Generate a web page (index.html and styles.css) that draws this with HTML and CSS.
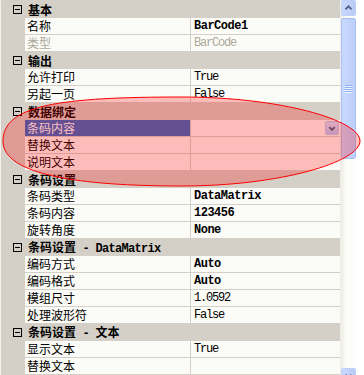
FILE: index.html
```html
<!DOCTYPE html>
<html>
<head>
<meta charset="utf-8">
<link rel="stylesheet" href="styles.css">
</head>
<body>
<div class="pg">
  <div class="grid">
    <div class="row hdr"><span class="mg"><svg class="box" width="9" height="9" viewBox="0 0 9 9"><rect x="0.5" y="0.5" width="8" height="8" fill="none" stroke="#000"/><path d="M2 4.5H7" stroke="#000"/></svg></span><span class="ht">基本</span></div>
    <div class="row"><span class="mg"></span><span class="nm">名称</span><span class="val b">BarCode1</span></div>
    <div class="row"><span class="mg"></span><span class="nm dis">类型</span><span class="val dis">BarCode</span></div>
    <div class="row hdr"><span class="mg"><svg class="box" width="9" height="9" viewBox="0 0 9 9"><rect x="0.5" y="0.5" width="8" height="8" fill="none" stroke="#000"/><path d="M2 4.5H7" stroke="#000"/></svg></span><span class="ht">输出</span></div>
    <div class="row"><span class="mg"></span><span class="nm">允许打印</span><span class="val">True</span></div>
    <div class="row"><span class="mg"></span><span class="nm">另起一页</span><span class="val">False</span></div>
    <div class="row hdr"><span class="mg"><svg class="box" width="9" height="9" viewBox="0 0 9 9"><rect x="0.5" y="0.5" width="8" height="8" fill="none" stroke="#000"/><path d="M2 4.5H7" stroke="#000"/></svg></span><span class="ht">数据绑定</span></div>
    <div class="row"><span class="mg"></span><span class="nm sel">条码内容</span><span class="val"><span class="dd"><svg width="13" height="13" viewBox="0 0 13 13"><path d="M3.5 5L6.5 8L9.5 5" fill="none" stroke="#4d6185" stroke-width="2"/></svg></span></span></div>
    <div class="row"><span class="mg"></span><span class="nm">替换文本</span><span class="val"></span></div>
    <div class="row"><span class="mg"></span><span class="nm">说明文本</span><span class="val"></span></div>
    <div class="row hdr"><span class="mg"><svg class="box" width="9" height="9" viewBox="0 0 9 9"><rect x="0.5" y="0.5" width="8" height="8" fill="none" stroke="#000"/><path d="M2 4.5H7" stroke="#000"/></svg></span><span class="ht">条码设置</span></div>
    <div class="row"><span class="mg"></span><span class="nm">条码类型</span><span class="val b">DataMatrix</span></div>
    <div class="row"><span class="mg"></span><span class="nm">条码内容</span><span class="val b">123456</span></div>
    <div class="row"><span class="mg"></span><span class="nm">旋转角度</span><span class="val b">None</span></div>
    <div class="row hdr"><span class="mg"><svg class="box" width="9" height="9" viewBox="0 0 9 9"><rect x="0.5" y="0.5" width="8" height="8" fill="none" stroke="#000"/><path d="M2 4.5H7" stroke="#000"/></svg></span><span class="ht">条码设置<span class="lat"> - DataMatrix</span></span></div>
    <div class="row"><span class="mg"></span><span class="nm">编码方式</span><span class="val b">Auto</span></div>
    <div class="row"><span class="mg"></span><span class="nm">编码格式</span><span class="val b">Auto</span></div>
    <div class="row"><span class="mg"></span><span class="nm">模组尺寸</span><span class="val">1.0592</span></div>
    <div class="row"><span class="mg"></span><span class="nm">处理波形符</span><span class="val">False</span></div>
    <div class="row hdr"><span class="mg"><svg class="box" width="9" height="9" viewBox="0 0 9 9"><rect x="0.5" y="0.5" width="8" height="8" fill="none" stroke="#000"/><path d="M2 4.5H7" stroke="#000"/></svg></span><span class="ht">条码设置<span class="lat"> - </span>文本</span></div>
    <div class="row"><span class="mg"></span><span class="nm">显示文本</span><span class="val">True</span></div>
    <div class="row"><span class="mg"></span><span class="nm">替换文本</span><span class="val"></span></div>
  </div>
  <div class="sb">
    <div class="sbtn"><svg width="15" height="16" viewBox="0 0 15 16"><path d="M4 9.5L7.5 6L11 9.5" fill="none" stroke="#4d6185" stroke-width="2"/></svg></div>
    <div class="thumb"><span class="grip"></span><span class="grip"></span><span class="grip"></span><span class="grip"></span></div>
    <div class="track"></div>
    <div class="sbtn"><svg width="15" height="16" viewBox="0 0 15 16"><path d="M4 6.5L7.5 10L11 6.5" fill="none" stroke="#4d6185" stroke-width="2"/></svg></div>
  </div>
  <div class="edge"></div>
  <svg class="mark" width="364" height="375" viewBox="0 0 364 375"><path d="M3 141C3 105 60 97 182 97C280 97 360 120 360 141C360 162 280 186 182 186C80 186 3 175 3 141Z" fill="rgba(255,0,0,0.25)" stroke="#ff0000" stroke-width="1"/></svg>
</div>
</body>
</html>
```
FILE: styles.css
```css
* { box-sizing: border-box; }
body {
  margin: 0;
  background: #fff;
  font-family: "Noto Sans CJK SC", sans-serif;
  font-size: 12px;
  color: #000;
}
.pg {
  position: relative;
  width: 364px;
  height: 375px;
  overflow: hidden;
  display: flex;
  align-items: flex-start;
}
.grid {
  width: 340px;
  flex: none;
  border-top: 1px solid #d4d0c8;
  border-left: 1px solid #f3f2ec;
  background: #d4d0c8;
}
.row {
  display: flex;
  height: 17px;
}
.mg {
  width: 24px;
  flex: none;
  background: #d4d0c8;
  display: flex;
  align-items: center;
}
.box { margin-left: 12px; display: block; }
.hdr { align-items: center; }
.ht {
  padding-left: 3px;
  font-weight: bold;
  line-height: 16px;
  white-space: nowrap;
}
.lat {
  font-family: "Liberation Mono", monospace;
  font-size: 12px;
  letter-spacing: -0.7px;
}
.nm {
  width: 166px;
  flex: none;
  background: #fbfbf7;
  border-right: 1px solid #d4d0c8;
  border-bottom: 1px solid #d4d0c8;
  padding-left: 2px;
  line-height: 16px;
  white-space: nowrap;
}
.nm.sel { background: #316ac5; color: #fff; }
.dis { color: #aca899; }
.val {
  flex: 1;
  display: flex;
  align-items: center;
  background: #fbfbf7;
  border-bottom: 1px solid #d4d0c8;
  padding-left: 3px;
  font-family: "Liberation Mono", monospace;
  font-size: 12px;
  letter-spacing: -1.2px;
  white-space: nowrap;
}
.val.b { font-weight: bold; letter-spacing: -0.5px; }
.dd {
  margin-left: auto;
  margin-right: 1px;
  width: 14px;
  height: 14px;
  border: 1px solid #b9cbf3;
  border-radius: 2px;
  background: linear-gradient(#d6e3fd, #b6cbf7);
  display: flex;
  align-items: center;
  justify-content: center;
}
.sb {
  width: 16px;
  height: 384px;
  flex: none;
  display: flex;
  flex-direction: column;
  background: linear-gradient(90deg, #ecebe4, #fbfbf8 40%, #fdfdfb);
}
.sbtn {
  height: 16px;
  margin-left: 1px;
  border: 1px solid #bfd0f7;
  border-radius: 2px;
  background: linear-gradient(90deg, #c8d8fd, #b8cbf7);
  display: flex;
  align-items: center;
  justify-content: center;
}
.thumb {
  height: 141px;
  margin-top: 2px;
  margin-left: 1px;
  border: 1px solid #a9c0f1;
  border-radius: 2px;
  background: linear-gradient(90deg, #c9d9fd, #bccffa);
  display: flex;
  flex-direction: column;
  align-items: center;
  justify-content: center;
  gap: 1px;
}
.grip {
  width: 7px;
  height: 1px;
  background: #8fb0ee;
  box-shadow: 0 1px 0 #eef3fe;
}
.track { flex: 1; }
.edge {
  width: 8px;
  height: 375px;
  flex: none;
  background: #fff;
}
.mark {
  position: absolute;
  left: 0;
  top: 0;
  pointer-events: none;
}
```
